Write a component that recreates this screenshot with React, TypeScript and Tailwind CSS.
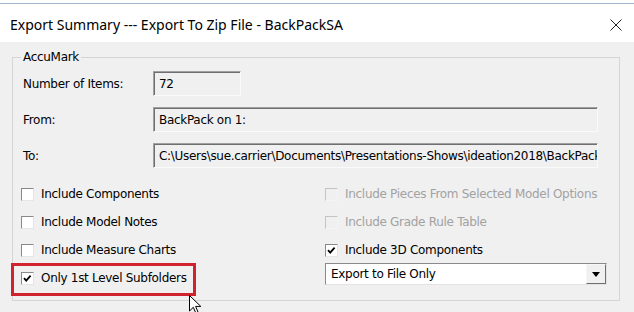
const ui = { fontFamily: '"DejaVu Sans", Verdana, sans-serif' };
const title = { fontFamily: '"Noto Sans", "Open Sans", sans-serif' };

function Check({ checked, disabled }: { checked?: boolean; disabled?: boolean }) {
  return (
    <span
      className={
        disabled
          ? 'flex h-[13px] w-[13px] shrink-0 border border-b-[#f4f4f4] border-l-[#c4c4c4] border-r-[#f4f4f4] border-t-[#c4c4c4] bg-[#f0f0f0]'
          : 'flex h-[13px] w-[13px] shrink-0 border border-b-[#e6e6e6] border-l-[#8a8a8a] border-r-[#e6e6e6] border-t-[#8a8a8a] bg-white'
      }
    >
      {checked && (
        <svg width="11" height="11" viewBox="0 0 11 11">
          <path d="M2 5.2 L4.2 7.6 L8.6 2.6" fill="none" stroke="#000" strokeWidth="1.8" />
        </svg>
      )}
    </span>
  );
}

function Field({ value, wide }: { value: string; wide?: boolean }) {
  return (
    <div
      className={
        (wide ? 'w-[445px] ' : 'w-[88px] ') +
        'flex h-[25px] items-center overflow-hidden whitespace-nowrap border border-b-[#fafafa] border-l-[#a0a0a0] border-r-[#fafafa] border-t-[#a0a0a0] bg-[#f0f0f0] pl-[5px] shadow-[inset_1px_1px_0_#6f6f6f]'
      }
    >
      {value}
    </div>
  );
}

function Option({ label, checked, disabled }: { label: string; checked?: boolean; disabled?: boolean }) {
  return (
    <div className="flex h-[28px] items-center gap-[7px]">
      <Check checked={checked} disabled={disabled} />
      <span className={disabled ? 'text-[#a2a2a2]' : 'text-black'}>{label}</span>
    </div>
  );
}

export default function App() {
  return (
    <div className="relative flex h-[312px] w-[634px] flex-col overflow-hidden bg-white text-[12px] tracking-[-0.3px] text-black" style={ui}>
      <div className="mt-[3px] h-[1px] bg-[#a3b8cc]" />
      <div className="flex h-[38px] items-center justify-between pl-[10px] pr-[12px] pt-[3px]">
        <span className="text-[14px] tracking-normal text-black" style={title}>
          Export Summary --- Export To Zip File - BackPackSA
        </span>
        <svg width="12" height="12" viewBox="0 0 12 12">
          <path d="M0.5 0.5 L11.5 11.5 M11.5 0.5 L0.5 11.5" stroke="#222" strokeWidth="1" />
        </svg>
      </div>

      <div className="flex-1 bg-[#f0f0f0] pl-[12px] pt-[8px]">
        <fieldset className="h-[251px] w-[608px] border border-[#d5d5d5]">
          <legend className="ml-[8px] px-[2px] leading-[14px]">AccuMark</legend>

          <div className="flex flex-col gap-[11px] pl-[10px] pt-[7px]">
            <div className="flex items-center">
              <span className="w-[130px]">Number of Items:</span>
              <Field value="72" />
            </div>
            <div className="flex items-center">
              <span className="w-[130px]">From:</span>
              <Field value="BackPack on 1:" wide />
            </div>
            <div className="flex items-center">
              <span className="w-[130px]">To:</span>
              <Field value="C:\Users\sue.carrier\Documents\Presentations-Shows\ideation2018\BackPack" wide />
            </div>
          </div>

          <div className="mt-[12px] flex pl-[8px]">
            <div className="flex w-[304px] flex-col">
              <Option label="Include Components" />
              <Option label="Include Model Notes" />
              <Option label="Include Measure Charts" />
              <Option label="Only 1st Level Subfolders" checked />
            </div>
            <div className="flex flex-col">
              <Option label="Include Pieces From Selected Model Options" disabled />
              <Option label="Include Grade Rule Table" disabled />
              <Option label="Include 3D Components" checked />
              <div className="-mt-[1px] flex h-[22px] w-[282px] border border-b-[#e3e3e3] border-l-[#8a8a8a] border-r-[#e3e3e3] border-t-[#8a8a8a] bg-white">
                <span className="flex flex-1 items-center pl-[5px]">Export to File Only</span>
                <span className="flex w-[20px] items-center justify-center border border-b-[#6f6f6f] border-l-[#f7f7f7] border-r-[#6f6f6f] border-t-[#f7f7f7] bg-[#f0f0f0]">
                  <svg width="8" height="5" viewBox="0 0 8 5">
                    <path d="M0 0 H8 L4 5 Z" fill="#000" />
                  </svg>
                </span>
              </div>
            </div>
          </div>
        </fieldset>
      </div>

      {/* annotation highlight */}
      <div className="absolute left-[11px] top-[263px] h-[33px] w-[185px] border-[3px] border-[#d0232f]" />

      {/* mouse pointer */}
      <svg className="absolute left-[189px] top-[295px]" width="13" height="19" viewBox="0 0 13 19">
        <path d="M0.5 0.5 L0.5 16 L4.3 12.3 L6.8 18 L9 17 L6.6 11.4 L11.8 11.4 Z" fill="#fff" stroke="#000" strokeWidth="1" strokeLinejoin="round" />
      </svg>
    </div>
  );
}
